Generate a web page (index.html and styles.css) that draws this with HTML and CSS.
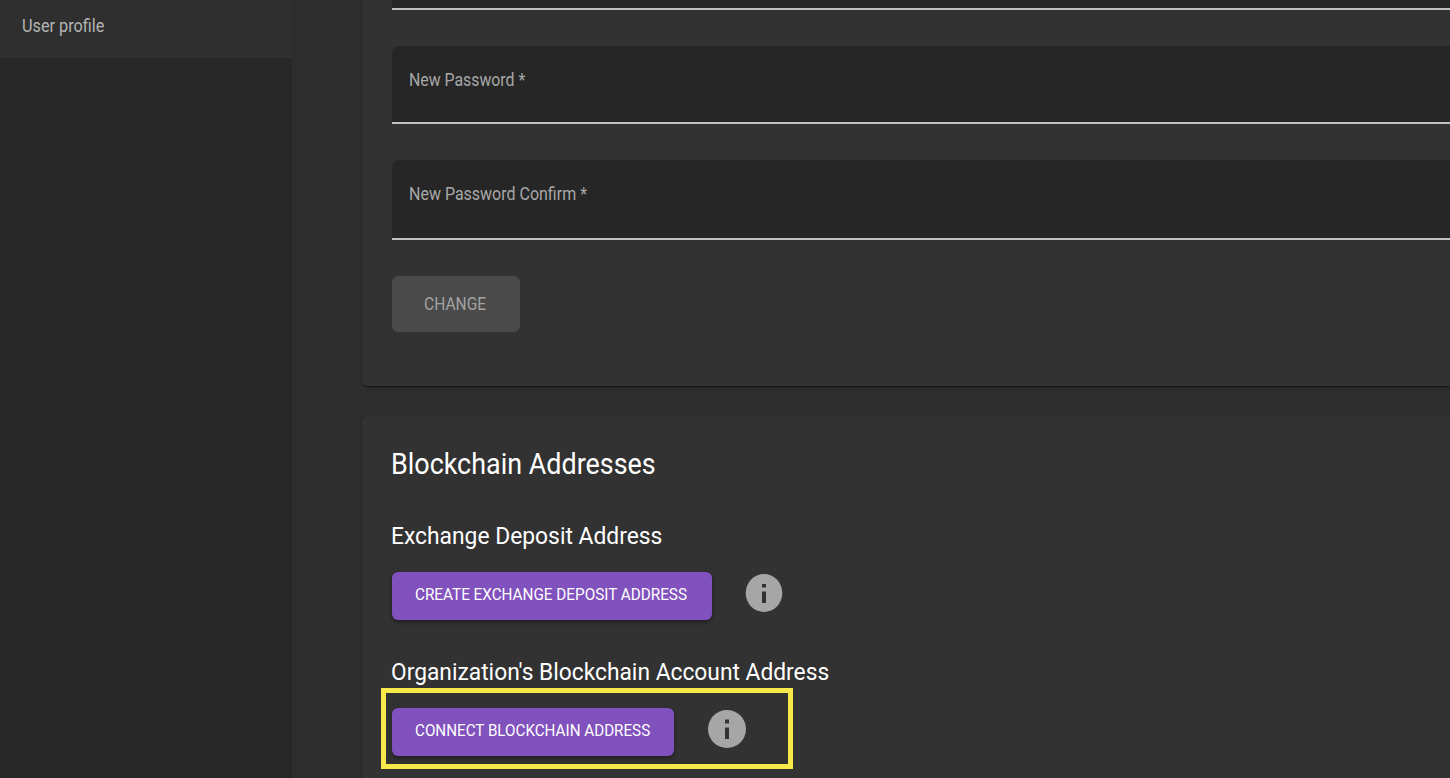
FILE: index.html
```html
<!DOCTYPE html>
<html lang="en">
<head>
<meta charset="utf-8">
<title>User profile</title>
<link rel="stylesheet" href="styles.css">
</head>
<body>
<div class="app">
  <nav class="sidebar"><a class="nav-item"><span class="t t-nav">User profile</span></a></nav>
  <main class="main">
    <section class="card card-password">
      <div class="field field-cut"></div>
      <div class="field"><span class="t t-new">New Password *</span></div>
      <div class="field field-tall"><span class="t t-confirm">New Password Confirm *</span></div>
      <button class="btn-disabled"><span class="t t-change">CHANGE</span></button>
    </section>
    <section class="card card-addresses">
      <h2 class="title"><span class="t t-title">Blockchain Addresses</span></h2>
      <h3 class="subtitle"><span class="t t-exchange">Exchange Deposit Address</span></h3>
      <div class="row">
        <button class="btn btn-create"><span class="t t-create">CREATE EXCHANGE DEPOSIT ADDRESS</span></button>
        <svg class="info" viewBox="0 0 38 38"><ellipse cx="19" cy="19" rx="18.3" ry="19"/><path d="M17 10h4v3.500h-4zM17 17.500h4v11.500h-4z"/></svg>
      </div>
      <h3 class="subtitle subtitle-org"><span class="t t-org">Organization's Blockchain Account Address</span></h3>
      <div class="row row-highlight">
        <button class="btn btn-connect"><span class="t t-connect">CONNECT BLOCKCHAIN ADDRESS</span></button>
        <svg class="info info-connect" viewBox="0 0 38 38"><circle cx="19" cy="19" r="19"/><path d="M17 9.500h4v4h-4zM17 17.500h4v11.500h-4z"/></svg>
      </div>
    </section>
  </main>
</div>
</body>
</html>
```
FILE: styles.css
```css
* { box-sizing: border-box; }
body { margin: 0; background: #2d2d2d; color: #fff; font-family: Roboto, "Liberation Sans", sans-serif; overflow: hidden; }
.app { display: flex; height: 778px; overflow: hidden; }
.sidebar { flex: 0 0 292px; background: #272727; }
.nav-item { display: flex; height: 58px; padding: 14px 22px 0; background: #2f2f2f; color: #b5b5b5; font-size: 17.5px; line-height: 24px; }
.main { flex: 1; padding-left: 70px; min-width: 0; }
.card { background: #323232; padding-left: 30px; box-shadow: 0 2px 2px -1px rgba(0,0,0,.5), 0 1px 3px rgba(0,0,0,.15); }
.card-password { height: 386px; border-radius: 0 0 0 6px; }
.card-addresses { height: 380px; margin-top: 30px; border-radius: 6px 0 0 0; padding-top: 30px; }
.field { height: 78px; margin-bottom: 36px; padding: 22px 17px 0; background: #262626; border-bottom: 2px solid #c1c1c1; border-radius: 7px 0 0 0; color: #a8a8a8; font-size: 17.5px; line-height: 24px; }
.field-cut { height: 10px; border-radius: 0; padding: 0; }
.field-tall { height: 80px; }
button { display: flex; align-items: center; border: 0; border-radius: 6px; font-family: inherit; }
.btn-disabled { width: 128px; height: 56px; padding: 0 32px 1px; background: #4a4a4a; color: #a2a2a2; font-size: 18px; }
/* Condensed lettering: each label is narrowed from its left edge */
.t { display: inline-block; white-space: nowrap; transform-origin: left center; }
.t-nav { transform: scaleX(.928); }
.t-new { transform: scaleX(.905); }
.t-confirm { transform: scaleX(.914); }
.t-change { transform: scaleX(.865); }
.t-title { transform: scaleX(.928); }
.t-exchange { transform: scaleX(.951); }
.t-create { transform: scaleX(.898); }
.t-org { transform: scaleX(.949); }
.t-connect { transform: scaleX(.894); }
.title { margin: 0 0 0 -1px; font-size: 29px; line-height: 36px; font-weight: 400; }
.subtitle { margin: 39px 0 0 -1px; font-size: 24px; line-height: 30px; font-weight: 400; }
.subtitle-org { margin-top: 37px; }
.row { display: flex; margin-top: 21px; }
.btn { height: 48px; padding: 0 23px 4px; background: #8151bd; color: #fff; font-size: 17px; box-shadow: 0 2px 4px rgba(0,0,0,.4); }
.btn-create { width: 320px; }
.btn-connect { width: 282px; }
.info { width: 38px; height: 38px; margin: 2px 0 0 33px; fill: #a6a6a6; }
.info-connect { margin-left: 34px; }
.info path { fill: #323232; }
.row-highlight { width: 412px; height: 81px; margin: 1px 0 0 -11px; padding: 15px 0 0 6px; border: 5px solid #f6e94a; }
```
